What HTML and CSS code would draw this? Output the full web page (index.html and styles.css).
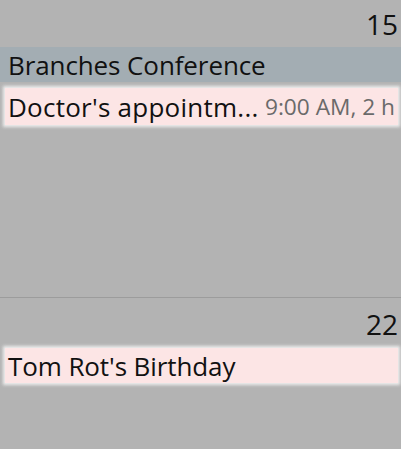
FILE: index.html
```html
<!DOCTYPE html>
<html>
<head>
<meta charset="utf-8">
<link rel="stylesheet" href="styles.css">
</head>
<body>
<div class="calendar">
  <section class="week week-first">
    <div class="day-number">15</div>
    <div class="event event-blue">
      <span class="title">Branches Conference</span>
    </div>
    <div class="event event-pink">
      <span class="title title-truncated" title="Doctor's appointment">Doctor's appointm...</span>
      <span class="time">9:00 AM, 2 h</span>
    </div>
  </section>
  <section class="week">
    <div class="day-number">22</div>
    <div class="event event-pink">
      <span class="title">Tom Rot's Birthday</span>
    </div>
  </section>
</div>
</body>
</html>
```

FILE: styles.css
```css
html, body {
  margin: 0;
  padding: 0;
}
body {
  width: 401px;
  height: 449px;
  overflow: hidden;
  background: #b3b3b3;
  font-family: "Open Sans", "Noto Sans", sans-serif;
  color: #111;
}
.calendar {
  display: flex;
  flex-direction: column;
}
.week {
  display: flex;
  flex-direction: column;
}
.week-first {
  height: 297px;
  border-bottom: 1px solid #9c9c9c;
}
.day-number {
  height: 47px;
  text-align: right;
  font-size: 28px;
  line-height: 49px;
  padding-right: 3px;
  box-sizing: border-box;
}
.week + .week .day-number {
  height: 50px;
  line-height: 52px;
}
.event {
  display: flex;
  align-items: center;
  justify-content: space-between;
  height: 36px;
  padding: 0 3px 0 8px;
  box-sizing: border-box;
  font-size: 26px;
  letter-spacing: -0.1px;
  white-space: nowrap;
  overflow: hidden;
  gap: 8px;
}
.event-blue {
  background: #a3adb3;
  height: 35px;
  margin-bottom: 6px;
}
.event-pink {
  background: #fce5e5;
  height: 37px;
  margin: 0 3px 0 5px;
  padding-left: 3px;
  box-shadow: 0 0 3px 2px #eeeeee;
}
.week + .week .event-pink {
  height: 35px;
}
.title {
  min-width: 0;
}
.title-truncated {
  letter-spacing: 0.25px;
}
.time {
  flex-shrink: 0;
  color: #6a6a6a;
  font-size: 22.7px;
  letter-spacing: 0;
}
```
